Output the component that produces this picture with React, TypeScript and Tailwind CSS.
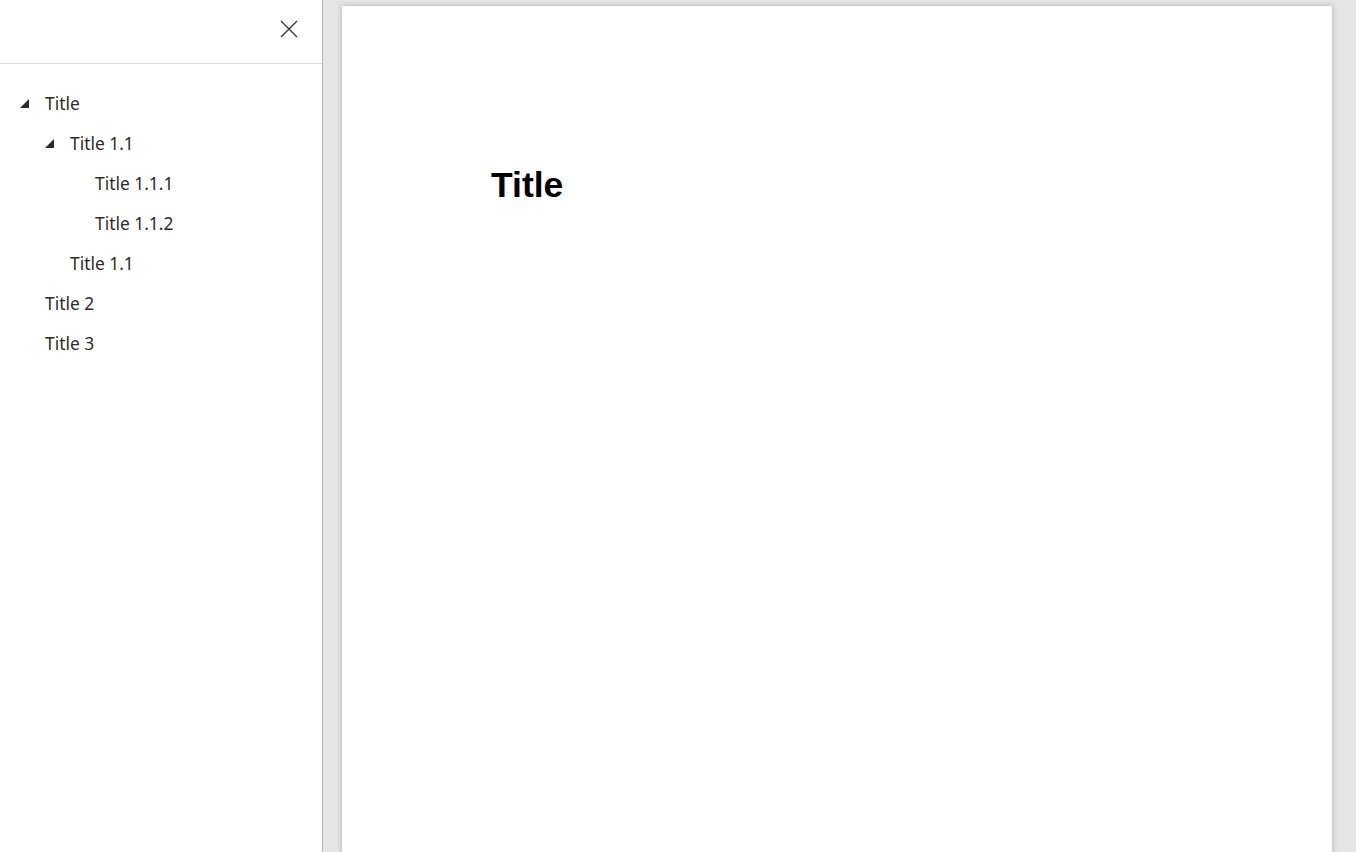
import React from 'react';

type Node = { title: string; level: number; open?: boolean };

const nodes: Node[] = [
  { title: 'Title', level: 0, open: true },
  { title: 'Title 1.1', level: 1, open: true },
  { title: 'Title 1.1.1', level: 2 },
  { title: 'Title 1.1.2', level: 2 },
  { title: 'Title 1.1', level: 1 },
  { title: 'Title 2', level: 0 },
  { title: 'Title 3', level: 0 },
];

const indent = ['pl-[20px]', 'pl-[45px]', 'pl-[70px]'];

const App = () => {
  return (
    <div className="flex h-[852px] w-[1356px] overflow-hidden bg-[#e6e6e6] font-['Noto_Sans',sans-serif]">
      {/* Outline */}
      <aside className="w-[323px] shrink-0 bg-white border-r border-[#b4b4b4] flex flex-col">
        <div className="h-[64px] border-b border-[#dedede] flex items-start justify-end pr-[24px] pt-[20px]">
          <svg width="18" height="18" viewBox="0 0 18 18" className="text-[#333]">
            <path d="M1 1L17 17M17 1L1 17" stroke="currentColor" strokeWidth="1.3" fill="none" />
          </svg>
        </div>
        <ul className="pt-[19px]">
          {nodes.map((n, i) => (
            <li key={i} className={`h-[40px] flex items-center text-[17.4px] text-[#2b2b2b] ${indent[n.level]}`}>
              <span className="w-[25px] shrink-0 flex items-center">
                {n.open && (
                  <svg width="9" height="9" viewBox="0 0 9 9">
                    <path d="M9 0L9 9L0 9Z" fill="#2b2b2b" />
                  </svg>
                )}
              </span>
              <span>{n.title}</span>
            </li>
          ))}
        </ul>
      </aside>

      {/* Document */}
      <main className="flex-1 pl-[19px] pt-[6px]">
        <div className="w-[990px] h-[900px] bg-white shadow-[0_0_6px_rgba(0,0,0,0.25)] pl-[149px] pt-[162px]">
          <h1 className="font-['Liberation_Sans',Arial,sans-serif] font-bold text-[35.5px] leading-none text-black">Title</h1>
        </div>
      </main>
    </div>
  );
};

export default App;
